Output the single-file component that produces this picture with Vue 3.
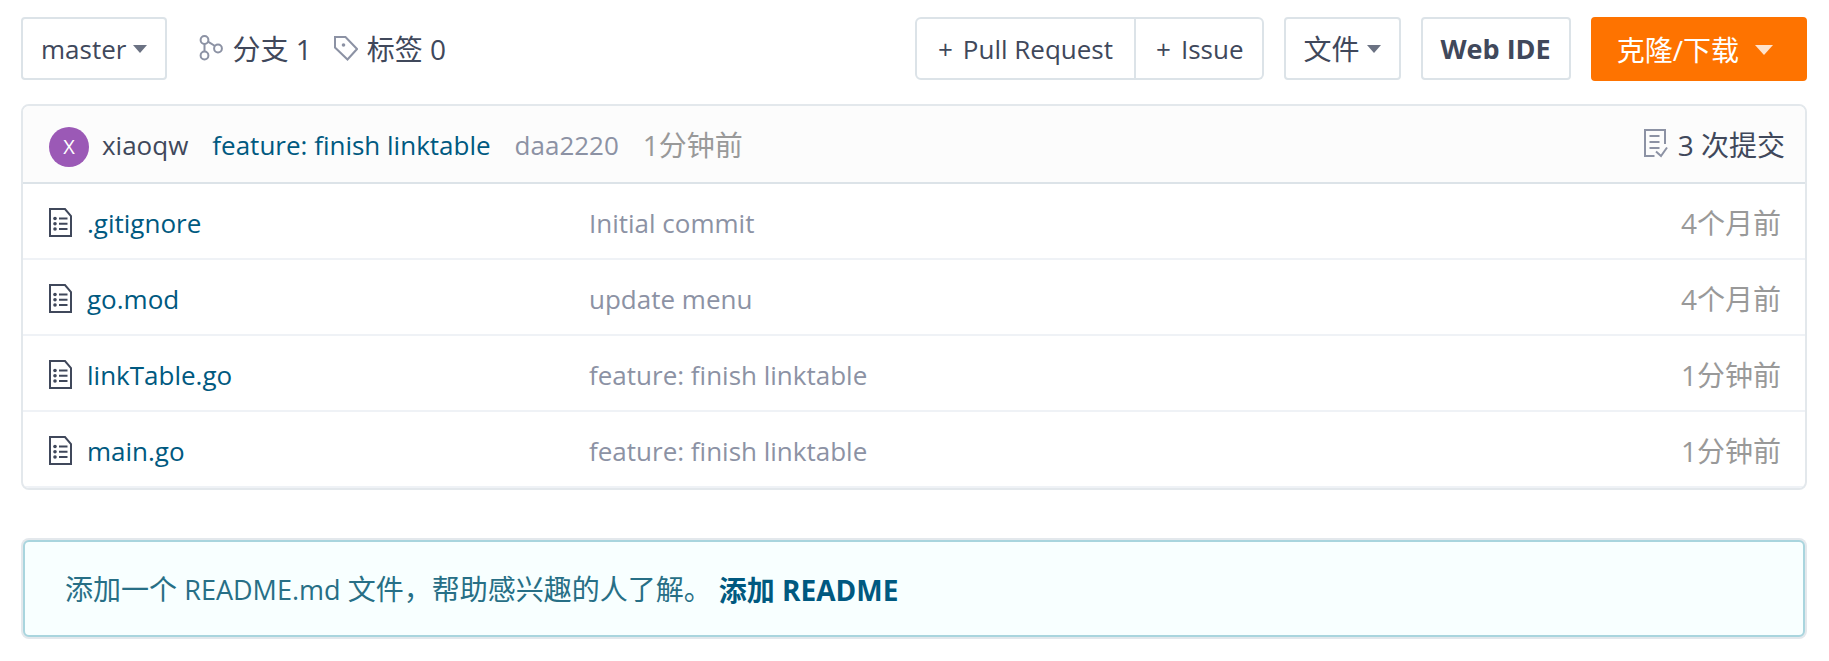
<template>
  <div class="repo">
    <div class="toolbar">
      <button type="button" class="btn btn-branch">
        <span>master</span>
        <i class="caret"></i>
      </button>
      <a href="#" class="stat">
        <svg class="stat-icon" viewBox="0 0 24 26" aria-hidden="true">
          <circle cx="5.500" cy="5" r="3.900" />
          <circle cx="5.500" cy="20.500" r="3.900" />
          <circle cx="19" cy="13.500" r="3.900" />
          <path d="M5.500 9V16.500M9 6.600L16 11" />
        </svg>
        <span>分支 1</span>
      </a>
      <a href="#" class="stat">
        <svg class="stat-icon" viewBox="0 0 24 26" aria-hidden="true">
          <path d="M1 2H11.500L23 14L13.500 24.500L1 12.500Z" />
          <circle class="dot" cx="9.500" cy="10" r="1.800" />
        </svg>
        <span>标签 0</span>
      </a>

      <div class="actions">
        <div class="btn-group">
          <button type="button" class="btn btn-pull">
            <span class="plus">+</span>Pull Request
          </button>
          <button type="button" class="btn btn-issue">
            <span class="plus">+</span>Issue
          </button>
        </div>
        <button type="button" class="btn btn-file">
          <span>文件</span>
          <i class="caret"></i>
        </button>
        <button type="button" class="btn btn-ide">Web IDE</button>
        <button type="button" class="btn btn-clone">
          <span>克隆/下载</span>
          <i class="caret"></i>
        </button>
      </div>
    </div>

    <div class="tree">
      <div class="commit">
        <span class="avatar">X</span>
        <a href="#" class="author">xiaoqw</a>
        <a href="#" class="commit-title">{{ commit.title }}</a>
        <a href="#" class="sha">{{ commit.sha }}</a>
        <span class="time">{{ commit.time }}</span>
        <a href="#" class="commit-count">
          <svg viewBox="0 0 25 30" aria-hidden="true">
            <path d="M22 16V2H2V28H11.500" />
            <path d="M6.500 8H16.500M6.500 14H16.500M6.500 20H16.500" />
            <path d="M13 23.500L18 28L24 19.500" />
          </svg>
          <span>3 次提交</span>
        </a>
      </div>
      <table class="files">
        <tbody>
          <tr v-for="file in files" :key="file.name">
            <td class="name">
              <div class="name-inner">
                <svg viewBox="0 0 23 29" aria-hidden="true">
                  <path d="M1 1H16L22 8V28H1Z" />
                  <path d="M10 10.500H18.500M10 15.800H18.500M10 21H18.500" />
                  <circle cx="6" cy="10.500" r="1.800" />
                  <circle cx="6" cy="15.800" r="1.800" />
                  <circle cx="6" cy="21" r="1.800" />
                </svg>
                <a href="#">{{ file.name }}</a>
              </div>
            </td>
            <td class="message">{{ file.message }}</td>
            <td class="time">{{ file.time }}</td>
          </tr>
        </tbody>
      </table>
    </div>

    <div class="readme-tip">
      <span>添加一个 <span class="latin">README.md</span> 文件，帮助感兴趣的人了解。</span>
      <a href="#">添加 README</a>
    </div>
  </div>
</template>

<script setup>
import { ref } from "vue";

const commit = ref({
  title: "feature: finish linktable",
  sha: "daa2220",
  time: "1分钟前",
});

const files = ref([
  { name: ".gitignore", message: "Initial commit", time: "4个月前" },
  { name: "go.mod", message: "update menu", time: "4个月前" },
  { name: "linkTable.go", message: "feature: finish linktable", time: "1分钟前" },
  { name: "main.go", message: "feature: finish linktable", time: "1分钟前" },
]);
</script>

<style>
body {
  margin: 0;
  background: #fff;
}
</style>

<style scoped>
.repo {
  padding: 17px 22px 23px 21px;
  font-family: "Open Sans", "Noto Sans CJK SC", sans-serif;
  font-size: 26px;
  line-height: 36px;
  color: #40485b;
}

a {
  color: inherit;
  text-decoration: none;
}

svg {
  flex: none;
  fill: none;
  stroke: #8c92a4;
  stroke-width: 2;
}

.toolbar {
  display: flex;
  align-items: flex-start;
  height: 64px;
  margin-bottom: 23px;
}

.btn {
  display: flex;
  align-items: center;
  justify-content: center;
  box-sizing: border-box;
  height: 63px;
  margin: 0;
  padding: 0 18px;
  font: inherit;
  color: #40485b;
  white-space: nowrap;
  background: #fff;
  border: 2px solid #dce3e8;
  border-radius: 4px;
}

.caret {
  margin-left: 7px;
  border: 7px solid transparent;
  border-top: 8px solid #6b7283;
  border-bottom: 0;
}

.stat {
  display: flex;
  align-items: center;
  height: 64px;
  margin-left: 22px;
  font-size: 28px;
}

.btn-branch + .stat {
  margin-left: 32px;
}

.stat-icon {
  width: 24px;
  height: 26px;
  margin-right: 9px;
  margin-bottom: 2px;
}

.stat-icon .dot {
  fill: #8c92a4;
  stroke: none;
}

.actions {
  display: flex;
  gap: 20px;
  margin-left: auto;
}

.btn-group {
  display: flex;
}

.btn-pull {
  padding: 0 21px;
  border-radius: 6px 0 0 6px;
}

.btn-issue {
  padding: 0 18px 0 20px;
  border-left: 0;
  border-radius: 0 6px 6px 0;
}

.plus {
  margin-right: 10px;
}

.btn-file {
  font-size: 28px;
}

.btn-ide {
  font-size: 27px;
  font-weight: 700;
}

.btn-clone {
  height: 64px;
  padding: 2px 32px 0 24px;
  font-size: 28px;
  color: #fff;
  background: #fe7300;
  border-color: #fe7300;
}

.btn-clone .caret {
  margin-left: 16px;
  border-width: 10px 9px 0;
  border-top-color: #ffe3cc;
}

.tree {
  border: 2px solid #e3e8ec;
  border-radius: 8px;
  overflow: hidden;
}

.commit {
  display: flex;
  align-items: center;
  box-sizing: border-box;
  height: 78px;
  padding: 2px 20px 0 26px;
  background: #fcfcfc;
  border-bottom: 2px solid #dce3e8;
}

.avatar {
  width: 40px;
  margin-top: 4px;
  margin-right: 13px;
  font-size: 20px;
  line-height: 40px;
  text-align: center;
  color: #fff;
  background: #9b59b6;
  border-radius: 50%;
}

.author,
.commit-title,
.sha {
  margin-right: 24px;
}

.commit-title,
.name a {
  color: #005980;
}

.sha,
.message {
  color: #8c92a4;
}

.time {
  font-size: 28px;
  color: #999;
}

.commit-count {
  display: flex;
  align-items: center;
  margin-left: auto;
  font-size: 28px;
}

.commit-count svg {
  width: 25px;
  height: 30px;
  margin-right: 10px;
  margin-bottom: 4px;
}

.files {
  width: 100%;
  border-collapse: separate;
  border-spacing: 0;
  table-layout: fixed;
}

.files td {
  box-sizing: border-box;
  height: 76px;
  padding: 4px 24px 0 0;
  border-bottom: 2px solid #eff2f6;
}

.files .name {
  width: 566px;
  padding-left: 26px;
}

.name-inner {
  display: flex;
  align-items: center;
}

.name-inner svg {
  width: 23px;
  height: 29px;
  margin-right: 15px;
  margin-bottom: 2px;
  stroke: #40485b;
}

.name-inner circle {
  fill: #40485b;
  stroke: none;
}

.files .time {
  width: 200px;
  text-align: right;
}

.readme-tip {
  display: flex;
  align-items: center;
  margin: 50px 2px 0;
  padding: 29px 40px 27px;
  font-size: 28px;
  color: #276f86;
  background: #f8ffff;
  border: 2px solid #a9d5de;
  border-radius: 6px;
  box-shadow: 0 0 0 2px #e3e8ec;
}

.readme-tip a {
  margin-left: 7px;
  font-weight: 700;
  color: #005980;
}

.latin {
  font-size: 27px;
}
</style>
